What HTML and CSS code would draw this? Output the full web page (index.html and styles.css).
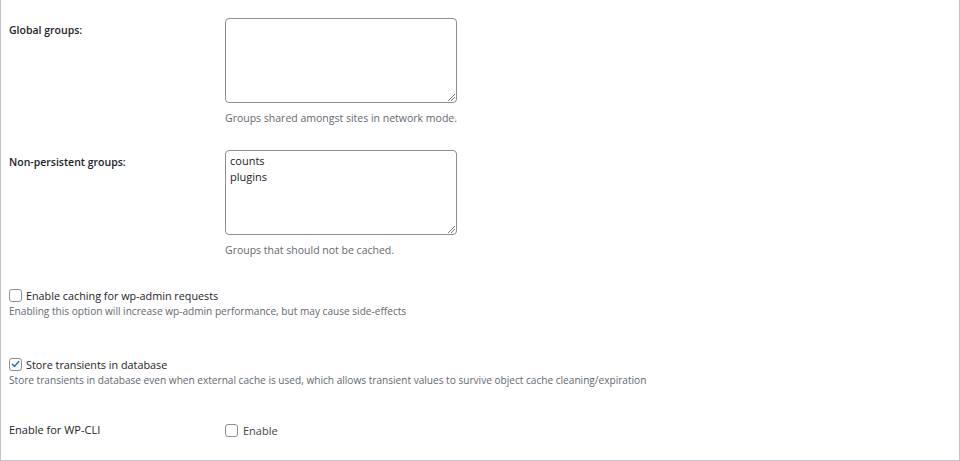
FILE: index.html
```html
<!DOCTYPE html>
<html>
<head>
<meta charset="utf-8">
<link rel="stylesheet" href="styles.css">
</head>
<body>
<div class="panel">
  <div class="row first">
    <div class="label">Global groups:</div>
    <div class="field">
      <div class="textarea"><span class="grip"></span></div>
      <p class="desc">Groups shared amongst sites in network mode.</p>
    </div>
  </div>
  <div class="row second">
    <div class="label">Non-persistent groups:</div>
    <div class="field">
      <div class="textarea"><div class="tv">counts<br>plugins</div><span class="grip"></span></div>
      <p class="desc">Groups that should not be cached.</p>
    </div>
  </div>
  <div class="check-block admin">
    <div class="check-line"><span class="cb"></span><span class="cb-label">Enable caching for wp-admin requests</span></div>
    <p class="small">Enabling this option will increase wp-admin performance, but may cause side-effects</p>
  </div>
  <div class="check-block transients">
    <div class="check-line"><span class="cb checked"><svg viewBox="0 0 12 12" width="12" height="12"><path d="M2.6 6.2 L5 8.6 L9.6 3.2" fill="none" stroke="#2271b1" stroke-width="1.6" stroke-linecap="round" stroke-linejoin="round"/></svg></span><span class="cb-label">Store transients in database</span></div>
    <p class="small">Store transients in database even when external cache is used, which allows transient values to survive object cache cleaning/expiration</p>
  </div>
  <div class="row cli">
    <div class="label plain">Enable for WP-CLI</div>
    <div class="field inline"><span class="cb"></span><span class="enable">Enable</span></div>
  </div>
</div>
</body>
</html>
```
FILE: styles.css
```css
html, body {
  margin: 0;
  padding: 0;
  background: #fff;
}
body {
  font-family: "Open Sans", "Noto Sans", sans-serif;
  color: #1d2327;
  width: 960px;
  height: 461px;
  overflow: hidden;
}
.panel {
  box-sizing: border-box;
  width: 960px;
  height: 461px;
  border-left: 1px solid #c3c4c7;
  border-right: 1px solid #c3c4c7;
  border-bottom: 1px solid #c3c4c7;
  padding-left: 8px;
  padding-top: 18px;
}
.row {
  display: flex;
}
.label {
  width: 216px;
  font-size: 10.5px;
  font-weight: 600;
  padding-top: 4px;
  line-height: 16px;
}
.label.plain {
  font-weight: 500;
  font-size: 11px;
}
.field {
  display: flex;
  flex-direction: column;
}
.textarea {
  position: relative;
  box-sizing: border-box;
  width: 232px;
  height: 85px;
  border: 1px solid #8c8f94;
  border-radius: 4px;
  background: #fff;
}
.tv {
  font-size: 11px;
  line-height: 16px;
  padding: 2px 4px;
  color: #1d2327;
}
.grip {
  position: absolute;
  right: 1px;
  bottom: 1px;
  width: 7px;
  height: 7px;
  background: linear-gradient(135deg, transparent 0 45%, #777 45% 52%, transparent 52% 70%, #777 70% 77%, transparent 77%);
}
.desc {
  margin: 7px 0 0;
  font-size: 10.5px;
  line-height: 16px;
  color: #646970;
}
.second {
  margin-top: 24px;
}
.admin {
  margin-top: 29px;
}
.transients {
  margin-top: 37px;
}
.check-line {
  display: flex;
  align-items: center;
  height: 16px;
}
.cb {
  box-sizing: border-box;
  width: 13px;
  height: 13px;
  border: 1px solid #8c8f94;
  border-radius: 3px;
  background: #fff;
  display: inline-flex;
  align-items: center;
  justify-content: center;
  flex: none;
}
.cb svg {
  display: block;
}
.cb-label {
  margin-left: 4px;
  font-size: 10.8px;
  font-weight: 500;
}
.small {
  margin: 0;
  font-size: 10.1px;
  line-height: 16px;
  color: #646970;
  font-weight: 500;
}
.cli {
  margin-top: 34px;
  align-items: center;
}
.cli .label {
  padding-top: 0;
}
.field.inline {
  flex-direction: row;
  align-items: center;
}
.enable {
  margin-left: 5px;
  font-size: 11px;
  color: #3c434a;
}
```
